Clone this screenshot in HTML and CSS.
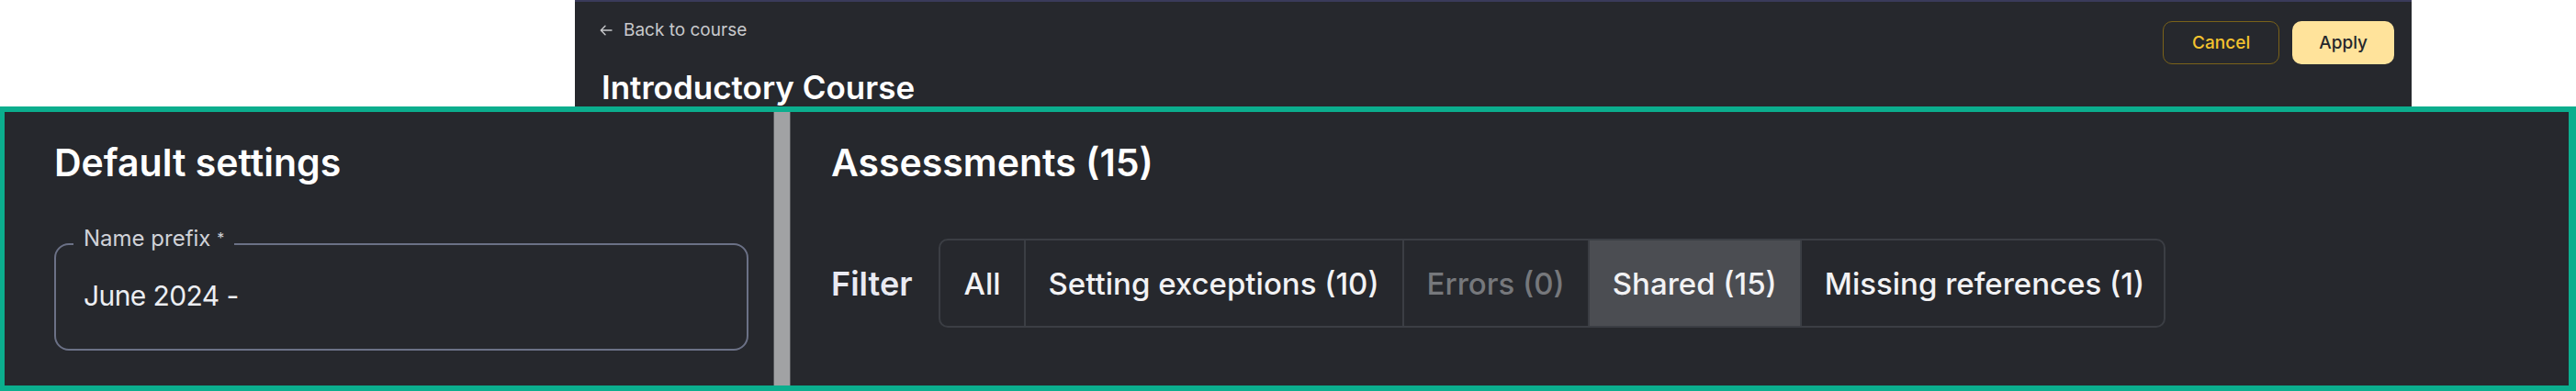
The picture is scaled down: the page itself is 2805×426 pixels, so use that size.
FILE: index.html
```html
<!DOCTYPE html>
<html lang="en">

<head>
    <meta charset="UTF-8">
    <meta name="viewport" content="width=device-width, initial-scale=1.0">
    <title>Bulk copy assessments</title>
    <link rel="stylesheet" href="styles.css">
</head>

<body>
    <!--顶部栏-->
    <header class="topbar">
        <div class="topbar-main">
            <a class="back-link" href="#">
                <svg class="back-icon" width="14" height="12" viewBox="0 0 14 12" fill="none" stroke="currentColor" stroke-width="1.4" stroke-linecap="round" stroke-linejoin="round">
                    <path d="M13 6H1.5M6 1.3L1.3 6L6 10.7" />
                </svg>
                Back to course
            </a>
            <h1 class="course-title">Introductory Course</h1>
        </div>
        <div class="topbar-actions">
            <button class="btn btn-outline">Cancel</button>
            <button class="btn btn-primary">Apply</button>
        </div>
    </header>

    <!--编辑区-->
    <main class="editor">
        <section class="defaults">
            <h2 class="section-title">Default settings</h2>
            <fieldset class="field">
                <legend class="field-label">Name prefix <span class="req">*</span></legend>
                <input class="field-input" type="text" value="June 2024 -">
            </fieldset>
        </section>

        <div class="splitter"></div>

        <section class="assessments">
            <h2 class="section-title">Assessments (15)</h2>
            <div class="filter-row">
                <span class="filter-label">Filter</span>
                <div class="segments">
                    <button class="segment">All</button>
                    <button class="segment">Setting exceptions (10)</button>
                    <button class="segment disabled">Errors (0)</button>
                    <button class="segment current">Shared (15)</button>
                    <button class="segment">Missing references (1)</button>
                </div>
            </div>
        </section>
    </main>
</body>

</html>
```

FILE: styles.css
```css
* {
    margin: 0;
    padding: 0;
    box-sizing: border-box;
}

body {
    background-color: #fff;
    font-family: "Inter", "Noto Sans", sans-serif;
}

button,
input {
    font-family: inherit;
}

/* 顶部栏 */
.topbar {
    width: 2000px;
    height: 116px;
    margin-left: 626px;
    padding: 19px 19px 0 27px;
    background-color: #26282d;
    border-top: 2px solid #3a3b5a;
    display: flex;
    justify-content: space-between;
    align-items: flex-start;
    overflow: hidden;
}

.back-link {
    display: flex;
    align-items: center;
    gap: 12px;
    height: 24px;
    font-size: 19px;
    line-height: 24px;
    color: #c8c9cc;
    text-decoration: none;
}

.course-title {
    margin-top: 28px;
    padding-left: 2px;
    font-size: 35px;
    line-height: 44px;
    font-weight: 600;
    color: #fff;
}

.topbar-actions {
    display: flex;
    gap: 14px;
    padding-top: 2px;
}

.btn {
    height: 47px;
    padding: 0 31px;
    border-radius: 10px;
    font-size: 19px;
    font-weight: 500;
    cursor: pointer;
}

.btn-outline {
    background: transparent;
    border: 1.5px solid #7a6219;
    color: #f4c22f;
}

.btn-primary {
    padding: 0 29px;
    background-color: #ffe39b;
    border: none;
    color: #25272c;
}

/* 编辑区 */
.editor {
    height: 310px;
    display: flex;
    background-color: #26282d;
    border-style: solid;
    border-color: #0bae8e;
    border-width: 6px 8px 6px 5px;
}

.defaults {
    width: 837px;
    padding: 31px 27px 0 54px;
}

.splitter {
    width: 19px;
    background-color: #a1a2a4;
    border-left: 1px solid #55575b;
    border-right: 1px solid #55575b;
}

.assessments {
    flex: 1;
    padding: 31px 0 0 44px;
}

.section-title {
    font-size: 41px;
    line-height: 48px;
    font-weight: 600;
    color: #fff;
}

/* 输入框 */
.field {
    margin-top: 44px;
    padding: 0 19px 22px;
    border: 2px solid #6b7186;
    border-radius: 16px;
}

.field-label {
    padding: 0 11px 12px;
    font-size: 24px;
    line-height: 29px;
    color: #d0d2d8;
}

.req {
    font-size: 16px;
    vertical-align: top;
}

.field-input {
    display: block;
    width: 100%;
    height: 72px;
    padding: 0 11px;
    background: transparent;
    border: none;
    outline: none;
    font-size: 30px;
    letter-spacing: -0.6px;
    color: #eceef2;
}

/* 筛选 */
.filter-row {
    margin-top: 59px;
    display: flex;
    align-items: center;
    gap: 29px;
}

.filter-label {
    font-size: 36px;
    font-weight: 600;
    color: #e9eaf2;
}

.segments {
    display: flex;
    height: 97px;
    border: 2px solid #3b3e44;
    border-radius: 10px;
    overflow: hidden;
}

.segment {
    padding: 0 25px;
    background: transparent;
    border: none;
    border-left: 2px solid #3b3e44;
    font-size: 33px;
    font-weight: 500;
    color: #f2f2f4;
    cursor: pointer;
}

.segment:first-child {
    border-left: none;
}

.segment.disabled {
    color: #76787c;
}

.segment.current {
    background-color: #4b4d52;
}

.segment:last-child {
    padding-right: 21px;
}
```
